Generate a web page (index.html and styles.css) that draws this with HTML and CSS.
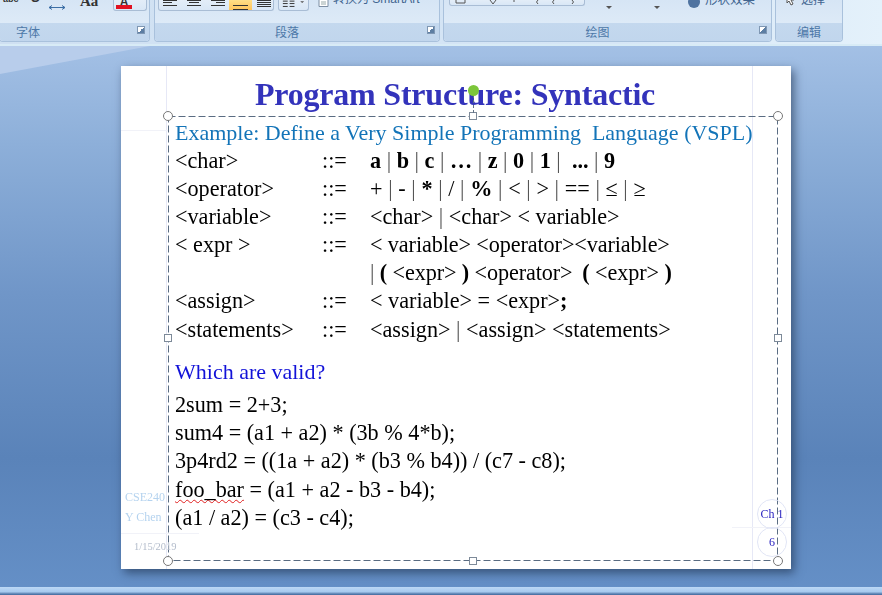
FILE: index.html
```html
<!DOCTYPE html>
<html lang="en">
<head>
<meta charset="utf-8">
<title>Program Structure: Syntactic</title>
<link rel="stylesheet" href="styles.css">
</head>
<body>
<div class="app">
  <header class="ribbon">
    <section class="group g-font">
      <div class="tools">
        <span class="tool t-abc">abc</span><span class="tool t-s">S</span>
        <svg class="ico arrows-ico" width="20" height="10" viewBox="0 0 20 10"><path d="M1 7.500h16M1 7.500l3-2M1 7.500l3 2M17 7.500l-3-2M17 7.500l-3 2" fill="none" stroke="#3b6ea5" stroke-width="1"/></svg>
        <span class="tool t-aa">Aa</span>
        <span class="box t-color"><span class="a-letter">A</span></span>
      </div>
      <div class="label"><span>字体</span><i class="launch"></i></div>
    </section>
    <section class="group g-para">
      <div class="tools">
        <span class="box para-box">
          <svg class="ico" width="112" height="10" viewBox="0 0 112 10"><path d="M4 .5h14M4 2.500h9M4 5.500h14M28 .5h14M30 2.500h10M28 5.500h14M52 .5h14M57 2.500h9M52 5.500h14" stroke="#333" fill="none"/></svg>
          <span class="active-align"><svg width="22" height="10" viewBox="0 0 22 10"><path d="M4 1.500h15M4 5.500h15" stroke="#333" fill="none"/></svg></span>
          <svg class="ico" width="22" height="10" viewBox="0 0 22 10"><path d="M4 .5h14M4 2.500h14M4 4.500h14M4 6.500h14" stroke="#333" fill="none"/></svg>
        </span>
        <span class="box cols-box"><svg width="30" height="10" viewBox="0 0 30 10"><path d="M4 1h5M11 1h5M4 3.500h5M11 3.500h5M4 6.500h5M11 6.500h5" stroke="#333" fill="none"/><path d="M22 1l2 2 2-2z" fill="#555"/></svg></span>
        <span class="smart"><svg width="12" height="9" viewBox="0 0 12 9"><path d="M2 .5h9v7H2z" fill="#fff" stroke="#7d8ea3"/><path d="M4 3h5M4 5h5" stroke="#9aa" fill="none"/></svg>转换为 SmartArt</span>
      </div>
      <div class="label"><span>段落</span><i class="launch"></i></div>
    </section>
    <section class="group g-draw">
      <div class="tools">
        <span class="box shapes-box"><svg width="130" height="6" viewBox="0 0 130 6"><path d="M6 0v3h9V0M40 0l3 4 3-4M64 0v2M88 0q-3 2 0 4M104 0q-3 2 0 4M122 0q3 2 0 4" fill="none" stroke="#555"/></svg></span>
        <span class="arrows"><b></b><b></b></span>
        <span class="effect"><i class="ball"></i>形状效果</span>
      </div>
      <div class="label"><span>绘图</span><i class="launch"></i></div>
    </section>
    <section class="group g-edit">
      <div class="tools"><span class="effect sel"><svg width="10" height="10" viewBox="0 0 10 10"><path d="M1 -3l7 7-3 0 2 4-2 1-2-4-2 2z" fill="#fff" stroke="#555"/></svg>选择</span></div>
      <div class="label"><span>编辑</span></div>
    </section>
  </header>

  <main class="workspace">
    <div class="swoosh"></div>
    <article class="slide">
      <i class="guide gv gv-left"></i>
      <i class="guide gv gv-right"></i>
      <i class="guide gh gh-top"></i>
      <i class="guide gh gh-left"></i>
      <i class="guide gh gh-right"></i>

      <h1 class="title">Program Structure: Syntactic</h1>

      <div class="frame">
        <svg class="dash" width="610" height="445" viewBox="0 0 610 445"><rect x=".5" y=".5" width="609" height="444" fill="none" stroke="#5a6c82" stroke-dasharray="7 3"/></svg>
        <i class="handle h-tl"></i><i class="handle h-tr"></i><i class="handle h-bl"></i><i class="handle h-br"></i>
        <i class="handle sq h-t"></i><i class="handle sq h-b"></i><i class="handle sq h-l"></i><i class="handle sq h-r"></i>
        <i class="stem"></i><i class="rotate"></i>

        <p class="example">Example: Define a Very Simple Programming&nbsp; Language (VSPL)</p>
        <div class="grammar">
          <span>&lt;char&gt;</span><span>::=</span><span><b>a</b> <u>|</u> <b>b</b> <u>|</u> <b>c</b> <u>|</u> <b>…</b> <u>|</u> <b>z</b> <u>|</u> <b>0</b> <u>|</u> <b>1</b> <u>|</u>&nbsp; <b>...</b> <u>|</u> <b>9</b></span>
          <span>&lt;operator&gt;</span><span>::=</span><span class="wide">+ <u>|</u> - <u>|</u> <b>*</b> <u>|</u> / <u>|</u> <b>%</b> <u>|</u> &lt; <u>|</u> &gt; <u>|</u> == <u>|</u> ≤ <u>|</u> ≥</span>
          <span>&lt;variable&gt;</span><span>::=</span><span>&lt;char&gt; <u>|</u> &lt;char&gt; &lt; variable&gt;</span>
          <span>&lt; expr &gt;</span><span>::=</span><span class="tight">&lt; variable&gt; &lt;operator&gt;&lt;variable&gt;</span>
          <span></span><span></span><span class="tight"><u>|</u> <b>(</b> &lt;expr&gt; <b>)</b> &lt;operator&gt;&#8201; <b>(</b> &lt;expr&gt; <b>)</b></span>
          <span>&lt;assign&gt;</span><span>::=</span><span>&lt; variable&gt; = &lt;expr&gt;<b>;</b></span>
          <span>&lt;statements&gt;</span><span>::=</span><span>&lt;assign&gt; <u>|</u> &lt;assign&gt; &lt;statements&gt;</span>
        </div>
        <p class="question">Which are valid?</p>
        <div class="code">
          <div>2sum = 2+3;</div>
          <div>sum4 = (a1 + a2) * (3b % 4*b);</div>
          <div>3p4rd2 = ((1a + a2) * (b3 % b4)) / (c7 - c8);</div>
          <div><span class="squiggle">foo_bar</span> = (a1 + a2 - b3 - b4);</div>
          <div>(a1 / a2) = (c3 - c4);</div>
        </div>
      </div>

      <div class="foot-left"><div>CSE240</div><div>Y Chen</div></div>
      <div class="foot-date">1/15/2019</div>
      <div class="badge b-ch">Ch 1</div>
      <div class="badge b-num">6</div>
    </article>
    <div class="statusbar"></div>
  </main>
</div>
</body>
</html>
```

FILE: styles.css
```css
* { box-sizing: border-box; }
html, body { margin: 0; padding: 0; }
body { width: 882px; height: 595px; overflow: hidden; font-family: "Liberation Serif", "Noto Sans CJK SC", serif; }
.app { width: 882px; height: 595px; display: flex; flex-direction: column; }

/* Ribbon */
.ribbon { height: 46px; flex: none; display: flex; gap: 4px; padding-bottom: 2px; padding-right: 39px;
  background: linear-gradient(90deg, #cfe0f2 0%, #d6e6f6 70%, #e4f1fb 100%); border-bottom: 2px solid #d8ebf6; }
.group { display: flex; flex-direction: column; overflow: hidden; border: 1px solid #a9c1dc; border-top: 0; border-radius: 0 0 4px 4px;
  background: linear-gradient(180deg, #d6e5f5, #e3eef9); }
.g-font { width: 151px; margin-left: -1px; }
.g-para { width: 286px; }
.g-draw { width: 329px; margin-left: -1px; }
.g-edit { width: 68px; margin-left: -1px; }
.tools { height: 23px; flex: none; display: flex; align-items: flex-start; position: relative; overflow: hidden; }
.label { flex: 1; position: relative; display: flex; align-items: center; justify-content: center; padding-right: 20px;
  background: linear-gradient(180deg, #c4d8ee, #c1d6ed); color: #4d78a8; font: 12px/1 "Noto Sans CJK SC", sans-serif; }
.g-font .label { justify-content: flex-start; padding: 0 0 0 16px; }
.g-edit .label { padding-right: 0; }
.launch { position: absolute; right: 4px; top: 3px; width: 8px; height: 8px; border: 1px solid #7f97b3; background: linear-gradient(135deg, #fff 50%, #5d7ea3 50%); }

.tool { font: bold 9px/1 "Liberation Sans", sans-serif; color: #333; flex: none; }
.t-abc { margin: -5px 0 0 3px; width: 20px; text-decoration: line-through; }
.t-s { margin: -9px 0 0 8px; width: 17px; font-size: 13px; }
.ico { display: block; flex: none; }
.arrows-ico { margin-left: 0; }
.t-aa { margin: -6px 0 0 12px; width: 20px; font: bold 15px/1 "Liberation Serif", serif; }
.box { display: inline-flex; align-items: flex-start; flex: none; background: linear-gradient(180deg, #e3edf8, #d9e7f6); border: 1px solid #a9bdd5; border-top: 0; border-radius: 0 0 3px 3px; height: 11px; }
.t-color { width: 34px; margin-left: 13px; padding-left: 2px; }
.a-letter { display: block; width: 16px; height: 9px; overflow: hidden; color: #333; font: bold 12px/5px "Liberation Sans", sans-serif; text-align: center; border-bottom: 4px solid #e01020; }

.g-para .tools { padding-left: 3px; }
.para-box { width: 116px; position: relative; }
.para-box > .ico:first-child { position: absolute; left: 0; top: 0; }
.active-align { position: absolute; left: 70px; top: 0; width: 23px; height: 10px; background: linear-gradient(#ffdf88, #ffc45c); }
.para-box > .ico:last-child { position: absolute; left: 94px; top: 0; }
.cols-box { width: 31px; margin-left: 4px; }
.smart { margin-left: 8px; display: inline-flex; gap: 4px; font: 12px/1 "Liberation Sans", "Noto Sans CJK SC", sans-serif; color: #40648f; margin-top: -8px; align-items: center; height: 14px; flex: none; }
.smart svg { margin-top: 8px; }

.shapes-box { width: 136px; height: 6px; margin-left: 5px; overflow: hidden; }
.arrows { width: 76px; display: flex; gap: 42px; padding: 6px 0 0 21px; flex: none; }
.arrows b { display: block; width: 0; height: 0; border: 3px solid transparent; border-top: 3px solid #555; border-bottom: 0; }
.effect { font: 12.500px/1 "Noto Sans CJK SC", sans-serif; color: #40648f; margin: -9px 0 0 27px; display: inline-flex; align-items: center; gap: 5px; flex: none; }
.ball { width: 12px; height: 12px; margin-top: 5px; border-radius: 50%; background: #4f73a0; }
.sel { font-size: 12px; margin: -9px 0 0 10px; }
.sel svg { margin-top: 5px; }

/* Workspace */
.workspace { flex: 1; position: relative; overflow: hidden;
  background: linear-gradient(180deg, #a3c0e5 0%, #8dafd9 18%, #7096c8 45%, #5a83b9 75%, #6590c7 100%); }
.swoosh { position: absolute; left: 0; top: 0; width: 150px; height: 28px; background: #b8cdeb; clip-path: polygon(0 0, 100% 0, 0 100%); }
.statusbar { position: absolute; left: 0; right: 0; bottom: 0; height: 8px; background: linear-gradient(180deg, #bcd8f5, #a7caef 60%, #4d74a6 90%); }

/* Slide */
.slide { position: absolute; left: 121px; top: 20px; width: 670px; height: 503px; background: #fff; box-shadow: 3px 4px 9px rgba(30, 50, 80, .65); }
.guide { position: absolute; display: block; }
.gv { top: 0; bottom: 0; width: 1px; background: #e6e8f6; }
.gv-left { left: 45px; }
.gv-right { left: 631px; }
.gh { height: 1px; background: #f1f2f8; }
.gh-top { left: 0; top: 64px; width: 48px; }
.gh-left { left: 0; top: 467px; width: 78px; }
.gh-right { left: 611px; right: 0; top: 461px; }

.title { position: absolute; left: 0; top: 8px; width: 668px; margin: 0; text-align: center; font: bold 32px/40px "Liberation Serif", serif; color: #3333bb; letter-spacing: -.2px; white-space: nowrap; will-change: transform; }

.frame { position: absolute; left: 47px; top: 50px; width: 610px; height: 445px; padding: 2px 0 0 7px; color: #000; font-size: 22.200px; line-height: 28.100px; white-space: nowrap; will-change: transform; }
.dash { position: absolute; left: 0; top: 0; display: block; z-index: 1; }
.handle { position: absolute; width: 10px; height: 10px; border-radius: 50%; border: 1px solid #777; background: #fff; display: block; z-index: 2; }
.handle.sq { width: 8px; height: 8px; border-radius: 0; border-color: #7d8a99; }
.h-tl { left: -5px; top: -5px; }
.h-tr { right: -5px; top: -5px; }
.h-bl { left: -5px; bottom: -5px; }
.h-br { right: -5px; bottom: -5px; }
.h-t { left: 301px; top: -4px; }
.h-b { left: 301px; bottom: -4px; }
.h-l { left: -4px; top: 218px; }
.h-r { right: -4px; top: 218px; }
.stem { position: absolute; left: 305px; top: -21px; width: 1px; height: 18px; border-left: 1px dashed #5f7186; z-index: 2; }
.rotate { position: absolute; left: 300px; top: -31px; width: 11px; height: 11px; border-radius: 50%; background: #7cc63a; z-index: 3; }

.example { margin: 0; color: #1374b8; font-size: 22px; line-height: 29px; }
.grammar { display: grid; grid-template-columns: 147px 48px 1fr; }
.grammar u { text-decoration: none; color: #555; }
.tight { letter-spacing: -.1px; }
.wide { letter-spacing: .05px; }
.question { margin: 13px 0 5px; color: #1212d8; font-size: 22px; line-height: 29px; }
.code { line-height: 28.300px; }
.squiggle { text-decoration: underline wavy #e02020 1px; text-underline-offset: 2px; }

.foot-left { position: absolute; left: 4px; top: 421px; font-size: 12px; line-height: 20px; color: #b5d3ef; }
.foot-date { position: absolute; left: 13px; top: 475px; font-size: 10.500px; line-height: 12px; color: #b3bccb; }
.badge { position: absolute; left: 636px; width: 30px; height: 30px; border-radius: 50%; border: 1px solid #e1e5f5; color: #2a23c0; display: flex; align-items: center; justify-content: center; font-size: 12px; }
.b-ch { top: 433px; }
.b-num { top: 461px; }
```
